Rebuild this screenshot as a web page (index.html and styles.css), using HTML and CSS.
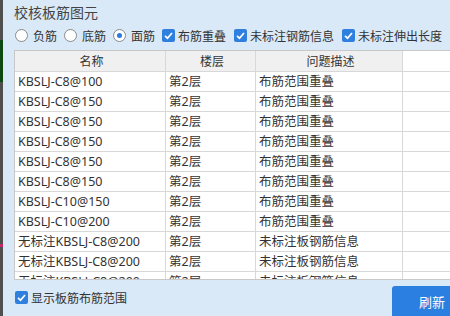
FILE: index.html
```html
<!DOCTYPE html>
<html lang="zh-CN">
  <head>
    <meta charset="UTF-8" />
    <meta name="viewport" content="width=device-width, initial-scale=1.0" />
    <title>校核板筋图元</title>
    <link rel="stylesheet" href="styles.css">
  </head>
  <body>
    <div class="app">
      <div class="strip">
        <span class="strip-green"></span>
        <span class="strip-red"></span>
      </div>
      <div class="panel">
        <h1>校核板筋图元</h1>

        <div class="options">
          <label class="opt"><span class="radio"></span>负筋</label>
          <label class="opt"><span class="radio"></span>底筋</label>
          <label class="opt"><span class="radio on"></span>面筋</label>
          <label class="opt box"><span class="check"><svg viewBox="0 0 13 13"><path d="M3 6.8 L5.5 9.2 L10 4" /></svg></span>布筋重叠</label>
          <label class="opt box"><span class="check"><svg viewBox="0 0 13 13"><path d="M3 6.8 L5.5 9.2 L10 4" /></svg></span>未标注钢筋信息</label>
          <label class="opt box"><span class="check"><svg viewBox="0 0 13 13"><path d="M3 6.8 L5.5 9.2 L10 4" /></svg></span>未标注伸出长度</label>
        </div>

        <div class="grid">
          <div class="row head">
            <div class="cell">名称</div>
            <div class="cell">楼层</div>
            <div class="cell">问题描述</div>
          </div>
          <div class="row"><div class="cell">KBSLJ-C8@100</div><div class="cell">第2层</div><div class="cell">布筋范围重叠</div></div>
          <div class="row"><div class="cell">KBSLJ-C8@150</div><div class="cell">第2层</div><div class="cell">布筋范围重叠</div></div>
          <div class="row"><div class="cell">KBSLJ-C8@150</div><div class="cell">第2层</div><div class="cell">布筋范围重叠</div></div>
          <div class="row"><div class="cell">KBSLJ-C8@150</div><div class="cell">第2层</div><div class="cell">布筋范围重叠</div></div>
          <div class="row"><div class="cell">KBSLJ-C8@150</div><div class="cell">第2层</div><div class="cell">布筋范围重叠</div></div>
          <div class="row"><div class="cell">KBSLJ-C8@150</div><div class="cell">第2层</div><div class="cell">布筋范围重叠</div></div>
          <div class="row"><div class="cell">KBSLJ-C10@150</div><div class="cell">第2层</div><div class="cell">布筋范围重叠</div></div>
          <div class="row"><div class="cell">KBSLJ-C10@200</div><div class="cell">第2层</div><div class="cell">布筋范围重叠</div></div>
          <div class="row"><div class="cell">无标注KBSLJ-C8@200</div><div class="cell">第2层</div><div class="cell">未标注板钢筋信息</div></div>
          <div class="row"><div class="cell">无标注KBSLJ-C8@200</div><div class="cell">第2层</div><div class="cell">未标注板钢筋信息</div></div>
          <div class="row"><div class="cell">无标注KBSLJ-C8@200</div><div class="cell">第2层</div><div class="cell">未标注板钢筋信息</div></div>
        </div>

        <div class="footer">
          <label class="opt box"><span class="check"><svg viewBox="0 0 13 13"><path d="M3 6.8 L5.5 9.2 L10 4" /></svg></span>显示板筋布筋范围</label>
          <button type="button" class="refresh">刷新</button>
        </div>
      </div>
    </div>
  </body>
</html>
```

FILE: styles.css
```css
html,
body {
  margin: 0;
  height: 100%;
  overflow: hidden;
}

body {
  font-family: "Noto Sans", "Noto Sans CJK SC", sans-serif;
  font-size: 12px;
  color: #333;
  background-color: #dae9f7;
}

.app {
  display: flex;
  height: 316px;
}

.strip {
  width: 3px;
  flex-shrink: 0;
  background-color: #4f4f4f;
  display: flex;
  flex-direction: column;
}

.strip-green {
  height: 42px;
  margin-top: 40px;
  background-color: #0d4a12;
}

.strip-red {
  height: 3px;
  margin-top: 162px;
  background-color: #c2286e;
}

.panel {
  flex: 1;
  display: flex;
  flex-direction: column;
  padding-left: 11px;
  min-width: 0;
}

h1 {
  margin: 0;
  padding-top: 2px;
  height: 24px;
  font-size: 14px;
  font-weight: normal;
  line-height: 20px;
  color: #444;
  font-family: "Noto Sans CJK SC", sans-serif;
}

.options {
  display: flex;
  align-items: center;
  height: 20px;
  gap: 7px;
  padding-left: 1px;
  white-space: nowrap;
}

.opt {
  display: flex;
  align-items: center;
  gap: 5px;
  font-family: "Noto Sans CJK SC", sans-serif;
  color: #333;
}

.opt.box {
  gap: 3px;
  margin-right: 1px;
}

.radio {
  width: 11px;
  height: 11px;
  border: 1px solid #8a8a8a;
  border-radius: 50%;
  background: white;
  position: relative;
}

.radio.on::after {
  content: "";
  position: absolute;
  left: 3px;
  top: 3px;
  width: 5px;
  height: 5px;
  border-radius: 50%;
  background-color: #2b7bd8;
}

.check {
  width: 13px;
  height: 13px;
  border-radius: 2px;
  background-color: #2f7fdf;
  display: flex;
}

.check svg {
  width: 13px;
  height: 13px;
}

.check path {
  fill: none;
  stroke: white;
  stroke-width: 1.7;
}

.grid {
  margin-top: 5px;
  height: 233px;
  background: white;
  border-top: 1px solid #c8c8c8;
  border-left: 1px solid #c8c8c8;
  overflow: hidden;
}

.row {
  display: grid;
  grid-template-columns: 151px 90px 147px;
  height: 19px;
  border-bottom: 1px solid #d8d8d8;
  font-size: 12.5px;
}

.row.head {
  height: 20px;
  font-size: 12px;
}

.row.head .cell {
  background-color: #f0f0f0;
  text-align: center;
  font-family: "Noto Sans CJK SC", sans-serif;
  line-height: 20px;
}

.cell {
  border-right: 1px solid #d8d8d8;
  padding-left: 3px;
  line-height: 19px;
  white-space: nowrap;
  overflow: hidden;
}

.footer {
  flex: 1;
  display: flex;
  align-items: flex-start;
  justify-content: space-between;
  border-top: 1px solid #c8c8c8;
}

.footer .opt {
  margin-top: 9px;
  margin-left: 1px;
}

.refresh {
  margin-top: 6px;
  width: 58px;
  height: 30px;
  border: none;
  border-radius: 3px 0 0 0;
  background-color: #2b7fe0;
  color: white;
  font-size: 13px;
  font-family: "Noto Sans CJK SC", sans-serif;
  padding: 0 0 0 27px;
  text-align: left;
}
```
